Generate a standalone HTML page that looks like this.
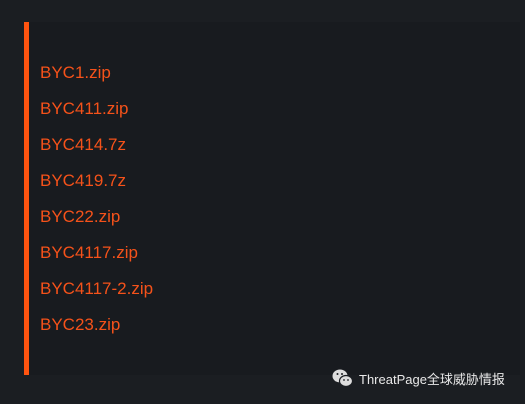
<!DOCTYPE html>
<html><head><meta charset="utf-8"><style>
html,body{margin:0;padding:0;width:525px;height:404px;background:#1b1e22;overflow:hidden}
.panel{position:absolute;left:24px;top:22px;width:496px;height:353px;background:#181b1f;border-left:5px solid #ff5410;box-sizing:border-box}
.item{position:absolute;left:11px;font:17px "Liberation Sans",sans-serif;color:#f5521a;white-space:nowrap}
.wm{position:absolute;left:332px;top:368px;display:flex;align-items:center;font:13px "Liberation Sans","Noto Sans CJK SC",sans-serif;color:#e8e8e8}
</style></head><body>
<div class="panel">
<div class="item" style="top:41px">BYC1.zip</div>
<div class="item" style="top:77px">BYC411.zip</div>
<div class="item" style="top:113px">BYC414.7z</div>
<div class="item" style="top:149px">BYC419.7z</div>
<div class="item" style="top:185px">BYC22.zip</div>
<div class="item" style="top:221px">BYC4117.zip</div>
<div class="item" style="top:257px">BYC4117-2.zip</div>
<div class="item" style="top:293px">BYC23.zip</div>
</div>
<div class="wm">
<svg width="22" height="20" viewBox="0 0 22 20"><ellipse cx="8" cy="8" rx="7.5" ry="6.5" fill="#ddd"/><ellipse cx="14" cy="13" rx="6.5" ry="5.5" fill="#ddd" stroke="#1b1e22" stroke-width="1.2"/><circle cx="5.5" cy="6" r="1" fill="#1b1e22"/><circle cx="10" cy="6" r="1" fill="#1b1e22"/><circle cx="12" cy="12" r=".9" fill="#1b1e22"/><circle cx="16" cy="12" r=".9" fill="#1b1e22"/></svg>
<span style="margin-left:5px">ThreatPage全球威胁情报</span>
</div>
</body></html>
